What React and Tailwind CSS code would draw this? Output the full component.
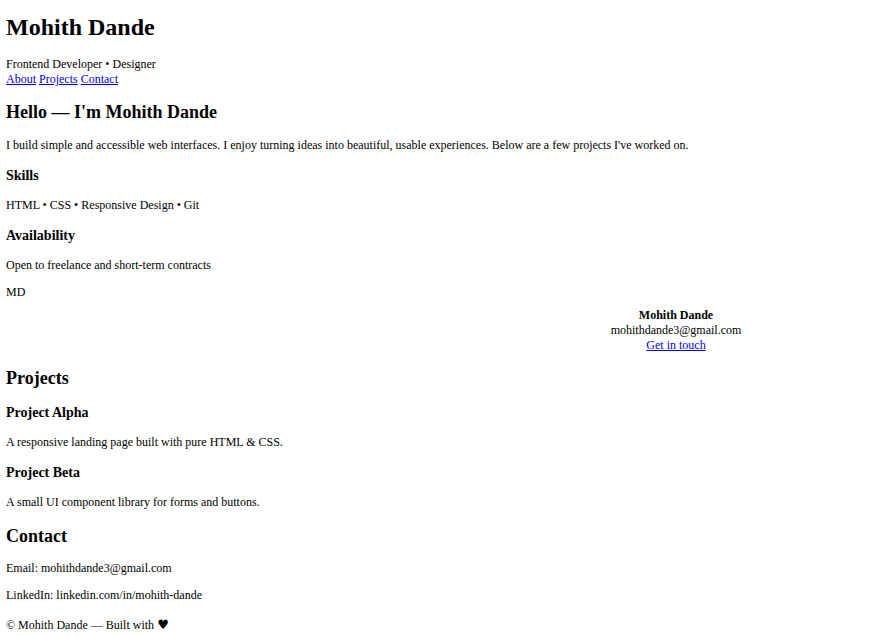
import React from "react";

const links = ["About", "Projects", "Contact"];

const App = () => {
  return (
    <div className="min-h-screen bg-white px-[6px] pb-[6px] font-['Liberation_Serif',serif] text-[12px] leading-[15px] text-black">
      {/* Cabecera */}
      <header>
        <h1 className="pt-[12px] text-[24px] font-bold leading-[30px]">
          Mohith Dande
        </h1>
        <p className="mt-[15px]">Frontend Developer • Designer</p>
        <nav>
          {links.map((l, i) => (
            <React.Fragment key={l}>
              <a href={`#${l.toLowerCase()}`} className="text-[#0000ee] underline">
                {l}
              </a>
              {i < links.length - 1 && " "}
            </React.Fragment>
          ))}
        </nav>
      </header>

      {/* Sobre mí */}
      <section id="about">
        <h2 className="mt-[14px] text-[18px] font-bold leading-[22px]">
          Hello — I'm Mohith Dande
        </h2>
        <p className="mt-[15px]">
          I build simple and accessible web interfaces. I enjoy turning ideas
          into beautiful, usable experiences. Below are a few projects I've
          worked on.
        </p>
        <h3 className="mt-[14px] text-[14px] font-bold leading-[17px]">Skills</h3>
        <p className="mt-[14px]">HTML • CSS • Responsive Design • Git</p>
        <h3 className="mt-[14px] text-[14px] font-bold leading-[17px]">
          Availability
        </h3>
        <p className="mt-[14px]">Open to freelance and short-term contracts</p>
        <div className="mt-[12px]">MD</div>
        <div className="mt-[8px] flex justify-end">
          <div className="w-[416px] text-center">
            <div className="font-bold">Mohith Dande</div>
            <div>mohithdande3@gmail.com</div>
            <a href="#contact" className="text-[#0000ee] underline">
              Get in touch
            </a>
          </div>
        </div>
      </section>

      {/* Proyectos */}
      <section id="projects">
        <h2 className="mt-[14px] text-[18px] font-bold leading-[22px]">Projects</h2>
        <h3 className="mt-[15px] text-[14px] font-bold leading-[17px]">
          Project Alpha
        </h3>
        <p className="mt-[14px]">A responsive landing page built with pure HTML &amp; CSS.</p>
        <h3 className="mt-[14px] text-[14px] font-bold leading-[17px]">
          Project Beta
        </h3>
        <p className="mt-[14px]">A small UI component library for forms and buttons.</p>
      </section>

      {/* Contacto */}
      <section id="contact">
        <h2 className="mt-[15px] text-[18px] font-bold leading-[22px]">Contact</h2>
        <p className="mt-[14px]">Email: mohithdande3@gmail.com</p>
        <p className="mt-[12px]">LinkedIn: linkedin.com/in/mohith-dande</p>
      </section>

      <footer className="mt-[14px]">
        © Mohith Dande — Built with{" "}
        <span className="font-['DejaVu_Sans',sans-serif] text-[13px]">♥</span>
      </footer>
    </div>
  );
};

export default App;
